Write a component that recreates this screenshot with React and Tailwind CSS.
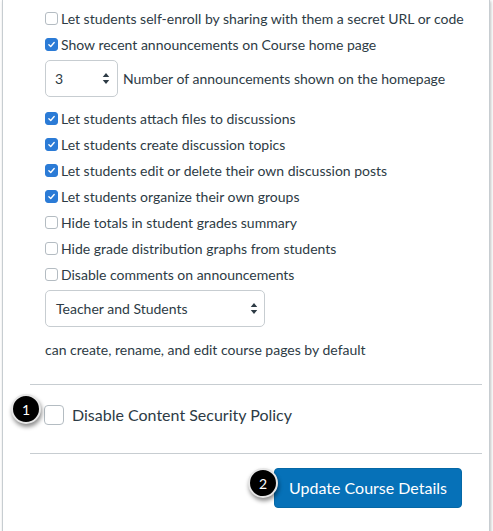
import React from 'react';

const Check = ({ checked }) => (
  <span
    className={`flex h-[13px] w-[13px] shrink-0 items-center justify-center rounded-[3px] border ${
      checked ? 'border-[#2b7bd6] bg-[#2b7bd6]' : 'border-[#b4bcc2] bg-white'
    }`}
  >
    {checked && (
      <svg viewBox="0 0 12 12" className="h-[9px] w-[9px]">
        <path d="M2.5 6.2 L5 8.6 L9.6 3.4" fill="none" stroke="white" strokeWidth="1.8" strokeLinecap="round" strokeLinejoin="round" />
      </svg>
    )}
  </span>
);

const Row = ({ checked, children }) => (
  <div className="flex h-[26px] items-center gap-[3px]">
    <Check checked={checked} />
    <span>{children}</span>
  </div>
);

const Arrows = () => (
  <svg viewBox="0 0 8 14" className="h-[13px] w-[8px]">
    <path d="M4 1 L7.5 5.5 H0.5 Z M4 13 L0.5 8.5 H7.5 Z" fill="#2d3b45" />
  </svg>
);

const Badge = ({ n, className }) => (
  <div
    className={`absolute flex h-[30px] w-[30px] items-center justify-center rounded-full border-2 border-[#e6e6e6] bg-black text-[14px] text-white shadow-[1px_3px_4px_rgba(0,0,0,0.45)] ${className}`}
  >
    {n}
  </div>
);

export default function App() {
  return (
    <div className="h-[531px] w-[493px] bg-white font-['Lato','Liberation_Sans',sans-serif] text-[14px] text-[#2d3b45]">
      <div className="relative ml-[2px] flex w-[488px] flex-col border-x border-b border-[#c7cdd1] bg-white pb-[24px] pt-[5px] shadow-[1px_1px_3px_rgba(0,0,0,0.25)]">
        <div className="pl-[42px]">
          <Row>Let students self-enroll by sharing with them a secret URL or code</Row>
          <Row checked>Show recent announcements on Course home page</Row>
          <div className="mt-[3px] flex items-center gap-[5px]">
            <div className="flex h-[37px] w-[73px] items-center justify-between rounded-[5px] border border-[#c7cdd1] pl-[9px] pr-[7px]">
              <span>3</span>
              <Arrows />
            </div>
            <span>Number of announcements shown on the homepage</span>
          </div>
          <div className="mt-[8px]">
            <Row checked>Let students attach files to discussions</Row>
            <Row checked>Let students create discussion topics</Row>
            <Row checked>Let students edit or delete their own discussion posts</Row>
            <Row checked>Let students organize their own groups</Row>
            <Row>Hide totals in student grades summary</Row>
            <Row>Hide grade distribution graphs from students</Row>
            <Row>Disable comments on announcements</Row>
          </div>
          <div className="mt-[3px] flex h-[37px] w-[220px] items-center justify-between rounded-[5px] border border-[#c7cdd1] pl-[10px] pr-[6px]">
            <span>Teacher and Students</span>
            <Arrows />
          </div>
          <div className="mt-[12px] flex h-[20px] items-center">can create, rename, and edit course pages by default</div>
        </div>

        <div className="ml-[27px] mr-[7px] mt-[25px] h-px bg-[#c7cdd1]" />

        <div className="mt-[15px] flex h-[30px] items-center gap-[8px] pl-[41px]">
          <span className="h-[20px] w-[20px] rounded-[4px] border border-[#b4bcc2] bg-white" />
          <span className="text-[16px]">Disable Content Security Policy</span>
        </div>
        <Badge n="1" className="left-[8px] top-[394px]" />

        <div className="ml-[27px] mr-[7px] mt-[23px] h-px bg-[#c7cdd1]" />

        <div className="mt-[14px] flex justify-end pr-[27px]">
          <button className="h-[40px] w-[188px] rounded-[4px] border border-[#0568a6] bg-[#0671b8] text-[16px] text-white">
            Update Course Details
          </button>
        </div>
        <Badge n="2" className="left-[245px] top-[468px]" />
      </div>
    </div>
  );
}
